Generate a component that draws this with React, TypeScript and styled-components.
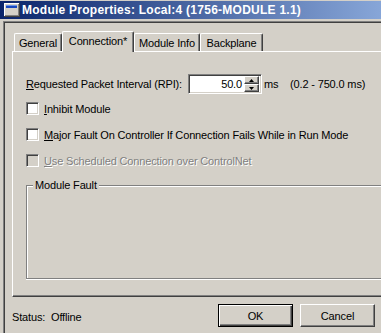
import styled, { createGlobalStyle } from 'styled-components';

const GlobalStyle = createGlobalStyle`
  html, body {
    margin: 0;
    padding: 0;
    background: #d4d0c8;
  }
  body {
    font-family: "Liberation Sans", Arial, sans-serif;
    font-size: 11px;
    letter-spacing: -0.15px;
    color: #000;
  }
`;

const Screen = styled.div`
  width: 381px;
  height: 333px;
  overflow: hidden;
  box-sizing: border-box;
  padding-top: 1px;
  background: #d4d0c8;
`;

const TitleBar = styled.div`
  height: 18px;
  display: flex;
  align-items: center;
  gap: 2px;
  padding-left: 4px;
  background: linear-gradient(to right, #0a246a, #87a6d8);
  color: #fff;
  font-weight: bold;
  font-size: 12px;
  letter-spacing: 0.25px;
  white-space: nowrap;
`;

const Client = styled.div`
  margin: 2px 0 0 3px;
  border-top: 1px solid #808080;
  border-left: 1px solid #808080;
  box-shadow: inset 1px 1px 0 #404040;
  padding: 9px 0 0 8px;
  height: 320px;
`;

const TabStrip = styled.div`
  display: flex;
  align-items: flex-end;
  height: 20px;
  padding-left: 2px;
  position: relative;
  z-index: 1;
`;

const Tab = styled.div<{ $active?: boolean; $w: number }>`
  box-sizing: border-box;
  width: ${(p) => p.$w}px;
  height: ${(p) => (p.$active ? 21 : 18)}px;
  margin-bottom: ${(p) => (p.$active ? -1 : 0)}px;
  border-top: 1px solid #fff;
  border-left: 1px solid #fff;
  border-right: 1px solid #404040;
  border-top-left-radius: 2px;
  border-top-right-radius: 2px;
  box-shadow: inset -1px 0 0 #808080;
  background: #d4d0c8;
  display: flex;
  align-items: center;
  justify-content: center;
  padding-bottom: ${(p) => (p.$active ? 3 : 0)}px;
  white-space: nowrap;
`;

const Panel = styled.div`
  box-sizing: border-box;
  height: 246px;
  border-top: 1px solid #fff;
  border-left: 1px solid #fff;
  border-bottom: 1px solid #404040;
  box-shadow: inset 0 -1px 0 #808080;
  padding: 22px 0 0 13px;
  display: flex;
  flex-direction: column;
`;

const RpiRow = styled.div`
  display: flex;
  align-items: center;
  height: 20px;
  white-space: nowrap;
`;

const RpiLabel = styled.span`
  width: 162px;
`;

const SpinBox = styled.div`
  box-sizing: border-box;
  width: 74px;
  height: 20px;
  display: flex;
  align-items: center;
  border: 1px solid;
  border-color: #808080 #fff #fff #808080;
  box-shadow: inset 1px 1px 0 #404040, inset -1px -1px 0 #d4d0c8;
  background: #fff;
  padding: 2px;
`;

const SpinValue = styled.span`
  flex: 1;
  text-align: right;
  padding-right: 2px;
`;

const SpinButtons = styled.div`
  width: 15px;
  height: 16px;
  display: flex;
  flex-direction: column;
`;

const SpinButton = styled.div`
  box-sizing: border-box;
  flex: 1;
  background: #d4d0c8;
  border-top: 1px solid #fff;
  border-left: 1px solid #fff;
  border-right: 1px solid #404040;
  border-bottom: 1px solid #404040;
  box-shadow: inset -1px -1px 0 #808080;
  display: flex;
  align-items: center;
  justify-content: center;
`;

const Unit = styled.span`
  width: 26px;
  padding-left: 2px;
`;

const CheckRow = styled.div<{ $gap: number }>`
  display: flex;
  align-items: center;
  gap: 5px;
  height: 13px;
  margin-top: ${(p) => p.$gap}px;
  white-space: nowrap;
`;

const CheckBox = styled.span<{ $disabled?: boolean }>`
  box-sizing: border-box;
  width: 13px;
  height: 13px;
  border: 1px solid;
  border-color: #808080 #fff #fff #808080;
  box-shadow: inset 1px 1px 0 #404040, inset -1px -1px 0 #d4d0c8;
  background: ${(p) => (p.$disabled ? '#d4d0c8' : '#fff')};
`;

const DisabledText = styled.span`
  color: #808080;
  text-shadow: 1px 1px 0 #fff;
`;

const GroupBox = styled.div`
  position: relative;
  box-sizing: border-box;
  height: 94px;
  margin-top: 18px;
  border-top: 1px solid #808080;
  border-left: 1px solid #808080;
  border-bottom: 1px solid #808080;
  box-shadow: inset 1px 1px 0 #fff, 0 1px 0 #fff;
`;

const GroupLegend = styled.span`
  position: absolute;
  top: -7px;
  left: 6px;
  padding: 0 2px;
  line-height: 13px;
  background: #d4d0c8;
`;

const Footer = styled.div`
  display: flex;
  align-items: center;
  justify-content: space-between;
  margin-top: 7px;
  padding-right: 6px;
  height: 23px;
`;

const Status = styled.span`
  white-space: pre;
  padding-top: 3px;
`;

const Buttons = styled.div`
  display: flex;
  gap: 7px;
`;

const Button = styled.div<{ $default?: boolean }>`
  box-sizing: border-box;
  width: 75px;
  height: 23px;
  display: flex;
  align-items: center;
  justify-content: center;
  background: #d4d0c8;
  ${(p) =>
    p.$default
      ? `border: 1px solid #000;
         box-shadow: inset 1px 1px 0 #fff, inset -1px -1px 0 #404040, inset -2px -2px 0 #808080;`
      : `border-top: 1px solid #fff;
         border-left: 1px solid #fff;
         border-right: 1px solid #404040;
         border-bottom: 1px solid #404040;
         box-shadow: inset -1px -1px 0 #808080;`}
`;

const WindowIcon = () => (
  <svg width="16" height="14" viewBox="0 0 16 14">
    <rect x="0" y="0" width="16" height="14" fill="#404040" />
    <rect x="0" y="0" width="15" height="13" fill="#fff" />
    <rect x="1" y="1" width="14" height="12" fill="#808080" />
    <rect x="1" y="1" width="13" height="11" fill="#d4d0c8" />
    <rect x="2" y="2" width="11" height="3" fill="#1848c0" />
    <rect x="2" y="2" width="11" height="1" fill="#6c94e8" />
  </svg>
);

const Arrow = ({ up }: { up?: boolean }) => (
  <svg width="5" height="3" viewBox="0 0 5 3">
    <path d={up ? 'M0 3 L2.5 0 L5 3 Z' : 'M0 0 L2.5 3 L5 0 Z'} fill="#000" />
  </svg>
);

export default function App() {
  return (
    <Screen>
      <GlobalStyle />
      <TitleBar>
        <WindowIcon />
        <span>Module Properties: Local:4 (1756-MODULE 1.1)</span>
      </TitleBar>
      <Client>
        <TabStrip>
          <Tab $w={48}>General</Tab>
          <Tab $w={72} $active>
            Connection*
          </Tab>
          <Tab $w={66}>Module Info</Tab>
          <Tab $w={63}>Backplane</Tab>
        </TabStrip>
        <Panel>
          <RpiRow>
            <RpiLabel>
              <u>R</u>equested Packet Interval (RPI):
            </RpiLabel>
            <SpinBox>
              <SpinValue>50.0</SpinValue>
              <SpinButtons>
                <SpinButton>
                  <Arrow up />
                </SpinButton>
                <SpinButton>
                  <Arrow />
                </SpinButton>
              </SpinButtons>
            </SpinBox>
            <Unit>ms</Unit>
            <span>(0.2 - 750.0 ms)</span>
          </RpiRow>
          <CheckRow $gap={8}>
            <CheckBox />
            <span>
              <u>I</u>nhibit Module
            </span>
          </CheckRow>
          <CheckRow $gap={13}>
            <CheckBox />
            <span>
              <u>M</u>ajor Fault On Controller If Connection Fails While in Run Mode
            </span>
          </CheckRow>
          <CheckRow $gap={13}>
            <CheckBox $disabled />
            <DisabledText>
              <u>U</u>se Scheduled Connection over ControlNet
            </DisabledText>
          </CheckRow>
          <GroupBox>
            <GroupLegend>Module Fault</GroupLegend>
          </GroupBox>
        </Panel>
        <Footer>
          <Status>Status:  Offline</Status>
          <Buttons>
            <Button $default>OK</Button>
            <Button>Cancel</Button>
          </Buttons>
        </Footer>
      </Client>
    </Screen>
  );
}
